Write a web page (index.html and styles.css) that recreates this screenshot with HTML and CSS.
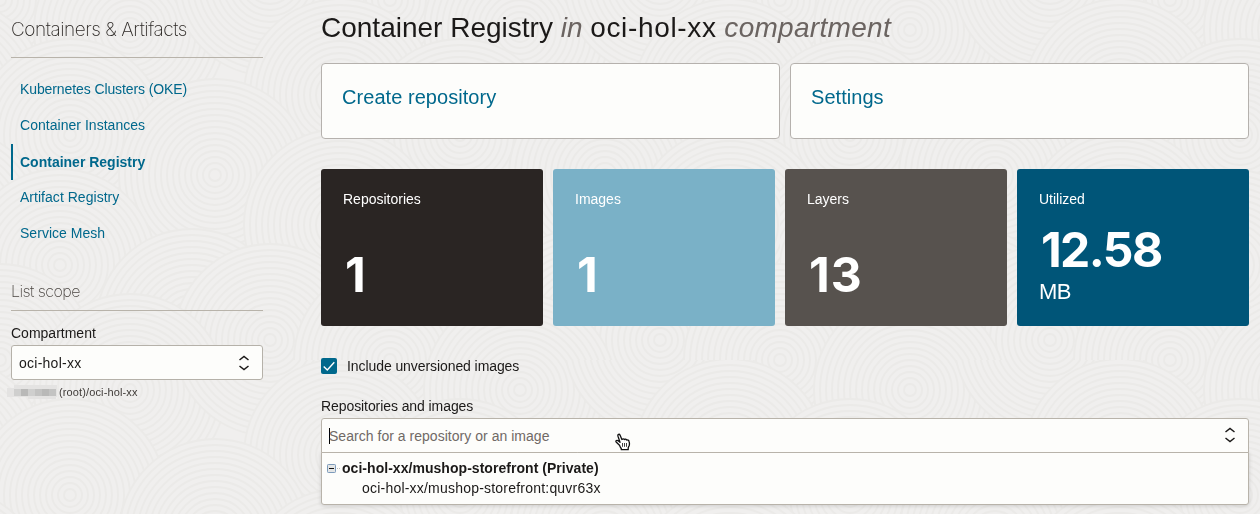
FILE: index.html
```html
<!DOCTYPE html>
<html lang="en">
<head>
<meta charset="utf-8">
<title>Container Registry</title>
<link rel="stylesheet" href="styles.css">
</head>
<body>
<svg class="texture" width="1260" height="514" aria-hidden="true">
  <defs>
    <g id="rings">
      <circle r="96" class="ring-base"/>
      <circle r="90"/><circle r="84"/><circle r="78"/><circle r="72"/><circle r="66"/><circle r="60"/><circle r="54"/><circle r="48"/><circle r="42"/><circle r="36"/><circle r="30"/><circle r="24"/><circle r="18"/><circle r="12"/><circle r="6"/>
    </g>
    <pattern id="swirls" width="390" height="360" patternUnits="userSpaceOnUse">
      <use href="#rings" x="0" y="0"/><use href="#rings" x="390" y="0"/>
      <use href="#rings" x="130" y="30"/><use href="#rings" x="270" y="-20"/>
      <use href="#rings" x="340" y="95"/><use href="#rings" x="-50" y="95"/>
      <use href="#rings" x="70" y="135"/><use href="#rings" x="215" y="175"/>
      <use href="#rings" x="340" y="225"/><use href="#rings" x="-50" y="225"/>
      <use href="#rings" x="60" y="265"/><use href="#rings" x="192" y="325"/>
      <use href="#rings" x="270" y="340"/><use href="#rings" x="0" y="360"/><use href="#rings" x="390" y="360"/>
      <use href="#rings" x="130" y="390"/>
    </pattern>
  </defs>
  <rect width="1260" height="514" fill="url(#swirls)"/>
</svg>
<div class="page">
  <aside class="sidebar">
    <h2 class="sidebar-title">Containers &amp; Artifacts</h2>
    <nav class="nav">
      <a class="nav-item">Kubernetes Clusters (OKE)</a>
      <a class="nav-item nav-item-wide">Container Instances</a>
      <a class="nav-item nav-item-active">Container Registry</a>
      <a class="nav-item nav-item-wide">Artifact Registry</a>
      <a class="nav-item nav-item-wide">Service Mesh</a>
    </nav>
    <h3 class="scope-title">List scope</h3>
    <div class="label compartment-label">Compartment</div>
    <div class="select">
      <span class="select-value">oci-hol-xx</span>
      <svg class="updown" width="12" height="16" viewBox="0 0 12 16"><path d="M1.500 5 6 1.500 10.500 5M1.500 11 6 14.500 10.500 11"/></svg>
    </div>
    <div class="path">
      <svg class="redacted" width="50" height="16" viewBox="0 0 50 16" shape-rendering="crispEdges">
        <path fill="#e4e3e2" d="M0 4h50v9H0zM7 1h43v3H7zM21 13h28v2H21z"/>
        <path fill="#cfcfce" d="M7 5h7v7H7zM21 5h7v7h-7z"/>
        <path fill="#b9b9b8" d="M14 5h7v7h-7zM35 5h7v7h-7z"/>
        <path fill="#c3c3c2" d="M28 5h7v7h-7zM42 5h7v7h-7z"/>
      </svg>
      <span>(root)/oci-hol-xx</span>
    </div>
  </aside>

  <main class="main">
    <h1 class="title">Container Registry <em>in</em> <span class="title-name">oci-hol-xx</span> <em class="title-kind">compartment</em></h1>
    <div class="actions">
      <a class="action">Create repository</a>
      <a class="action">Settings</a>
    </div>
    <div class="tiles">
      <div class="tile tile-dark"><span class="tile-label">Repositories</span><strong class="tile-value">1</strong></div>
      <div class="tile tile-sky"><span class="tile-label">Images</span><strong class="tile-value">1</strong></div>
      <div class="tile tile-gray"><span class="tile-label">Layers</span><strong class="tile-value">13</strong></div>
      <div class="tile tile-blue"><span class="tile-label">Utilized</span><strong class="tile-value">12.58</strong><span class="tile-unit">MB</span></div>
    </div>
    <div class="check-row">
      <svg width="16" height="16" viewBox="0 0 16 16"><rect width="16" height="16" rx="2" fill="#00688c"/><path d="M2.700 8.500 6.300 12 13.300 4.300" fill="none" stroke="#fff" stroke-width="1.400"/></svg>
      <span>Include unversioned images</span>
    </div>
    <div class="label search-label">Repositories and images</div>
    <div class="search">
      <span class="caret"></span>
      <span class="placeholder">Search for a repository or an image</span>
      <svg class="updown" width="12" height="16" viewBox="0 0 12 16"><path d="M1.500 5 6 1.500 10.500 5M1.500 11 6 14.500 10.500 11"/></svg>
      <svg class="pointer" width="16" height="18" viewBox="0 0 16 18"><path d="M5.500 14.500 4.500 12.300 1.400 9.200C.2 7.900 1.500 6.800 2.800 7.600L5 9.300 3 3.200C2.400 1.200 4.400.6 5.100 2.200L6.900 6.500C7.600 5.600 8.900 5.700 9.300 6.600c.9-.7 2-.4 2.400.5 1-.5 2 .1 2.300 1.100.5 1.500.6 3.100.2 4.300l-1 2.300V16.700H6.300v-1.200z" fill="#fff" stroke="#111" stroke-width="1.300" stroke-linejoin="round"/><path d="M7.500 10v3.800M9.500 10v3.800M11.500 10v3.800" stroke="#111" stroke-width=".8"/></svg>
    </div>
    <div class="results">
      <div class="result-parent">
        <svg width="15" height="9" viewBox="0 0 15 9"><rect x=".5" y=".5" width="8" height="8" rx=".8" fill="#e4e6e6" stroke="#7d9bbb"/><path d="M2 4.500h5" stroke="#111"/><path d="M10 4.500h1M12 4.500h1" stroke="#bbb"/></svg>
        <span>oci-hol-xx/mushop-storefront (Private)</span>
      </div>
      <div class="result-child">oci-hol-xx/mushop-storefront:quvr63x</div>
    </div>
  </main>
</div>
</body>
</html>
```
FILE: styles.css
```css
* { box-sizing: border-box; }
body {
  margin: 0;
  height: 514px;
  overflow: hidden;
  background: #f0efee;
  color: #1b1918;
  font: 14px/20px "Liberation Sans", Arial, sans-serif;
}
.texture { position: fixed; inset: 0; z-index: -1; }
.texture circle { fill: none; stroke: #ebeae8; stroke-width: 1.8; }
.texture .ring-base { fill: #f0efee; }
.page { display: flex; gap: 58px; padding-left: 11px; }
.sidebar { width: 252px; flex: none; }
.sidebar-title {
  margin: 0;
  height: 58px;
  padding-top: 20px;
  border-bottom: 1px solid #b8b3aa;
  font: 200 19px/20px Inter, sans-serif;
  letter-spacing: -0.45px;
  color: #2d2926;
}
.nav { display: flex; flex-direction: column; padding-top: 14px; }
.nav-item {
  height: 36px;
  padding-left: 9px;
  line-height: 35px;
  letter-spacing: -0.1px;
  color: #00688c;
}
.nav-item-wide { letter-spacing: 0.03px; }
.nav-item-active {
  padding-left: 7px;
  border-left: 2px solid #00688c;
  font-weight: bold;
  line-height: 36px;
  letter-spacing: 0;
}
.scope-title {
  margin: 28px 0 0;
  height: 31px;
  border-bottom: 1px solid #b8b3aa;
  font: 200 16px/22px Inter, sans-serif;
  letter-spacing: -0.55px;
  color: #4b4642;
}
.compartment-label { margin-top: 12px; height: 22px; }
.select {
  display: flex;
  align-items: center;
  justify-content: space-between;
  height: 35px;
  padding: 0 12px 0 7px;
  border: 1px solid #b5b1a9;
  border-radius: 3px;
  background: #fdfdfb;
}
.select-value { letter-spacing: 0.25px; }
.updown { fill: none; stroke: #1b1918; stroke-width: 1.5; }
.path {
  display: flex;
  align-items: center;
  gap: 2px;
  margin: 4px 0 0 -4px;
  font-size: 11px;
  line-height: 16px;
  letter-spacing: 0.13px;
  color: #3f3b38;
}
.main { width: 928px; }
.title {
  margin: 0;
  height: 63px;
  padding-top: 11px;
  font-size: 28px;
  font-weight: 400;
  line-height: 34px;
  white-space: nowrap;
}
.title em { color: #6b6461; }
.title .title-name { letter-spacing: 0.65px; }
.title .title-kind { letter-spacing: 0.3px; }
.actions { display: grid; grid-template-columns: 1fr 1fr; gap: 10px; }
.action {
  height: 76px;
  padding: 19px 20px;
  border: 1px solid #b5b1ad;
  border-radius: 4px;
  background: #fdfdfb;
  color: #00688c;
  font-size: 20px;
  line-height: 28px;
  letter-spacing: 0.05px;
}
.tiles { display: grid; grid-template-columns: 222px 222px 222px 232px; gap: 10px; margin-top: 30px; }
.tile {
  display: flex;
  flex-direction: column;
  height: 157px;
  padding: 20px 22px;
  border-radius: 3px;
  color: #fff;
}
.tile-dark { background: #2a2523; }
.tile-sky { background: #7ab1c7; }
.tile-gray { background: #57524e; }
.tile-blue { background: #005578; }
.tile-value {
  margin-top: 37px;
  padding-left: 2px;
  font: 700 48px/58px Inter, sans-serif;
  letter-spacing: 1px;
}
.tile-blue .tile-value { margin-top: 12px; letter-spacing: -1.6px; }
.tile-unit { font-size: 22px; line-height: 26px; letter-spacing: -0.5px; }
.check-row { display: flex; align-items: center; gap: 10px; height: 20px; margin-top: 30px; letter-spacing: -0.08px; }
.search-label { margin-top: 20px; height: 22px; letter-spacing: -0.08px; }
.search {
  position: relative;
  display: flex;
  align-items: center;
  height: 35px;
  padding: 0 12px 0 7px;
  border: 1px solid #b8b3aa;
  border-radius: 3px 3px 0 0;
  background: #fdfdfb;
}
.search .updown { margin-bottom: 2px; }
.caret { width: 1px; height: 16px; margin-right: -1px; background: #000; }
.placeholder { flex: 1; color: #706966; letter-spacing: 0.03px; }
.pointer { position: absolute; left: 293px; top: 14px; }
.results {
  height: 53px;
  margin-top: -1px;
  padding: 5px 5px 0;
  border: 1px solid #b8b3aa;
  border-radius: 0 0 3px 3px;
  background: #fdfdfb;
  box-shadow: 0 1px 4px rgba(0, 0, 0, 0.15);
}
.result-parent { display: flex; align-items: center; font-weight: bold; letter-spacing: 0.04px; }
.result-child { padding-left: 35px; letter-spacing: 0.21px; }
```
